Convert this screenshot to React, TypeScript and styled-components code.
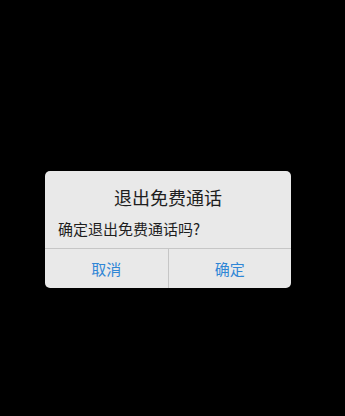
import styled, { createGlobalStyle } from "styled-components";

const GlobalStyle = createGlobalStyle`
  html, body {
    margin: 0;
    padding: 0;
    background: #000;
  }
  body {
    font-family: "Noto Sans CJK SC", "Noto Sans", sans-serif;
  }
`;

const Screen = styled.div`
  width: 345px;
  height: 416px;
  background: #000;
  padding-top: 171px;
  padding-left: 45px;
  box-sizing: border-box;
`;

const Dialog = styled.div`
  width: 246px;
  background: #e9e9e9;
  border-radius: 5px;
  display: flex;
  flex-direction: column;
  overflow: hidden;
`;

const Title = styled.div`
  padding-top: 14px;
  height: 24px;
  line-height: 24px;
  font-size: 18px;
  color: #1e1e1e;
  text-align: center;
`;

const Message = styled.div`
  margin-top: 10px;
  padding: 0 13px 9px;
  height: 20px;
  line-height: 20px;
  font-size: 15px;
  color: #1e1e1e;
`;

const ButtonRow = styled.div`
  display: flex;
  border-top: 1px solid #c6c6c6;
  height: 39px;
`;

const DialogButton = styled.button<{ $divider?: boolean }>`
  flex: 1;
  border: none;
  background: transparent;
  padding: 0;
  margin: 0;
  font-family: inherit;
  font-size: 15px;
  color: #2f86d6;
  border-right: ${({ $divider }) => ($divider ? "1px solid #c6c6c6" : "none")};
  cursor: pointer;
`;

export default function App() {
  return (
    <>
      <GlobalStyle />
      <Screen>
        <Dialog>
          <Title>退出免费通话</Title>
          <Message>确定退出免费通话吗?</Message>
          <ButtonRow>
            <DialogButton $divider>取消</DialogButton>
            <DialogButton>确定</DialogButton>
          </ButtonRow>
        </Dialog>
      </Screen>
    </>
  );
}
